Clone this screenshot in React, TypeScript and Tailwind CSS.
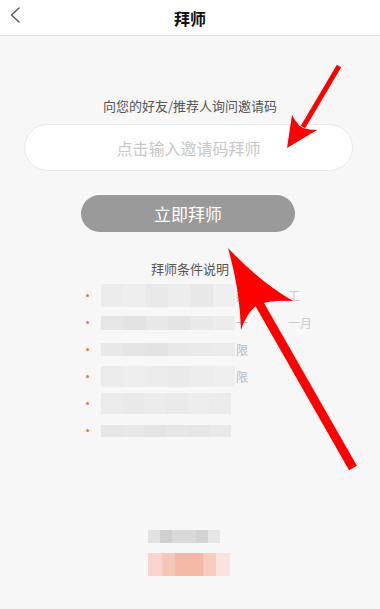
const FONT = { fontFamily: '"Noto Sans CJK SC", "Noto Sans", sans-serif' };

type Row = { h: number; w: number; shades: string[]; tail?: string; tail2?: string };

const rows: Row[] = [
  { h: 23, w: 134, shades: ["#ececec", "#eeeeee", "#e9e9e9", "#ededed", "#e8e8e8", "#efefef"], tail: "拜", tail2: "工" },
  { h: 14, w: 134, shades: ["#e6e6e6", "#e3e3e3", "#e8e8e8", "#e4e4e4", "#e9e9e9", "#ececec"], tail: "一", tail2: "一月" },
  { h: 13, w: 134, shades: ["#e8e8e8", "#e5e5e5", "#e3e3e3", "#e8e8e8", "#eaeaea", "#ebebeb"], tail: "限" },
  { h: 21, w: 134, shades: ["#ebebeb", "#eeeeee", "#ececec", "#eaeaea", "#ededed", "#efefef"], tail: "限" },
  { h: 21, w: 130, shades: ["#ebebeb", "#e9e9e9", "#ececec", "#eaeaea", "#ededed", "#ebebeb"] },
  { h: 12, w: 130, shades: ["#e6e6e6", "#e8e8e8", "#e4e4e4", "#e7e7e7", "#e5e5e5", "#e9e9e9"] },
];

function Blur({ row }: { row: Row }) {
  return (
    <div className="flex" style={{ width: row.w, height: row.h }}>
      {row.shades.map((c, i) => (
        <div key={i} className="flex-1" style={{ backgroundColor: c }} />
      ))}
    </div>
  );
}

export default function App() {
  return (
    <div className="relative h-[609px] w-[380px] overflow-hidden bg-[#f7f7f7]" style={FONT}>
      <header className="relative flex h-[36px] items-center justify-center border-b border-[#e6e6e6] bg-white">
        <svg className="absolute left-[9px] top-[7px]" width="12" height="16" viewBox="0 0 12 16" fill="none">
          <path d="M10 1 L2.5 8 L10 15" stroke="#555" strokeWidth="1.4" strokeLinecap="round" strokeLinejoin="round" />
        </svg>
        <h1 className="text-[16px] font-bold leading-none text-[#111]">拜师</h1>
      </header>

      <main className="flex flex-col">
        <p className="mt-[61px] text-center text-[13px] leading-[18px] text-[#555]">向您的好友/推荐人询问邀请码</p>

        <div className="ml-[24px] mt-[9px] flex h-[47px] w-[329px] items-center justify-center rounded-full border border-[#e8e8e8] bg-white">
          <span className="text-[16px] text-[#c8c8c8]">点击输入邀请码拜师</span>
        </div>

        <button className="ml-[81px] mt-[24px] flex h-[37px] w-[214px] items-center justify-center rounded-full bg-[#9a9a9a] text-[17px] text-white">
          立即拜师
        </button>

        <p className="mt-[28px] text-center text-[13px] leading-[18px] text-[#555]">拜师条件说明</p>

        <ul className="mt-[4px] flex flex-col">
          {rows.map((row, i) => (
            <li key={i} className="flex h-[27px] items-center">
              <span className="ml-[86px] h-[3px] w-[3px] rounded-full bg-[#f0783c]" />
              <div className="ml-[12px]">
                <Blur row={row} />
              </div>
              {row.tail ? <span className="ml-[1px] text-[12px] text-[#bbb]">{row.tail}</span> : null}
              {row.tail2 ? <span className="ml-[40px] text-[12px] text-[#ccc]">{row.tail2}</span> : null}
            </li>
          ))}
        </ul>

        <div className="ml-[148px] mt-[86px] flex h-[13px] w-[72px]">
          <div className="flex-1 bg-[#e2e2e2]" />
          <div className="flex-1 bg-[#cfcfcf]" />
          <div className="flex-[2] bg-[#dadada]" />
          <div className="flex-1 bg-[#d2d2d2]" />
          <div className="flex-1 bg-[#e6e6e6]" />
        </div>
        <div className="ml-[148px] mt-[10px] flex h-[23px] w-[82px]">
          <div className="flex-1 bg-[#f9d6cc]" />
          <div className="flex-1 bg-[#f6c6b8]" />
          <div className="flex-[2] bg-[#f4b8a6]" />
          <div className="flex-1 bg-[#f7ccbf]" />
          <div className="flex-1 bg-[#fae3dc]" />
        </div>
      </main>

      <svg className="pointer-events-none absolute inset-0" width="380" height="609" viewBox="0 0 380 609">
        <line x1="339" y1="66" x2="303" y2="127" stroke="#ff0000" strokeWidth="5" strokeLinecap="butt" />
        <path d="M287 148 L292 115 Q298 126 303 128 Q309 130 317 130 Z" fill="#ff0000" />
        <line x1="353" y1="468" x2="256" y2="298" stroke="#ff0000" strokeWidth="9" strokeLinecap="butt" />
        <path d="M228 248 Q260 282 293 301 Q270 300 257 305 Q246 314 241 330 Q240 290 228 248 Z" fill="#ff0000" />
      </svg>
    </div>
  );
}
